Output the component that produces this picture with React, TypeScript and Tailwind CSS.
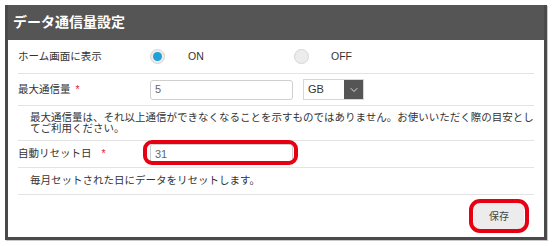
import { ChevronDown } from "lucide-react";

const font = {
  fontFamily: '"Liberation Sans", "Noto Sans CJK JP", sans-serif',
};

function Radio({ checked }: { checked: boolean }) {
  return (
    <span className="flex h-[15px] w-[15px] items-center justify-center rounded-full border border-[#d6d6d6] bg-[#ececec]">
      {checked && <span className="h-[9px] w-[9px] rounded-full bg-[#1ea0d8]" />}
    </span>
  );
}

function Required() {
  return <span className="ml-[5px] text-[#e5262e]">*</span>;
}

export default function App() {
  return (
    <div className="h-[246px] w-[552px] bg-white pl-[5px] pt-[5px] text-[#333]" style={font}>
      <div className="flex h-[235px] w-[542px] flex-col border-x-[3px] border-b-[3px] border-[#4a4a4a] shadow-[1px_1px_0_#c8c8c8]">
        <div className="flex h-[35px] items-center bg-[#555] pl-[5px] text-[14px] font-bold text-white">
          データ通信量設定
        </div>
        <div className="flex flex-col px-[10px] text-[10.5px]">
          <div className="flex h-[34px] items-center border-b border-[#e3e3e3]">
            <span className="w-[132px]">ホーム画面に表示</span>
            <Radio checked />
            <span className="ml-[23px] w-[106px]">ON</span>
            <Radio checked={false} />
            <span className="ml-[22px]">OFF</span>
          </div>
          <div className="flex h-[32px] items-center border-b border-[#e3e3e3]">
            <span className="w-[132px]">
              最大通信量
              <Required />
            </span>
            <div className="flex h-[20px] w-[143px] items-center rounded-[3px] border border-[#cfcfcf] pl-[4px] text-[11px] text-[#666]">
              5
            </div>
            <div className="ml-[10px] flex h-[21px] w-[61px] items-stretch border border-[#d6d6d6] text-[11px]">
              <span className="flex flex-1 items-center pl-[4px]">GB</span>
              <span className="flex w-[19px] items-center justify-center bg-[#555]">
                <ChevronDown size={12} color="#ddd" strokeWidth={2} />
              </span>
            </div>
          </div>
          <div className="flex h-[35px] flex-col justify-center border-b border-[#e3e3e3] pl-[12px] leading-[11px]">
            <span className="whitespace-nowrap">
              最大通信量は、それ以上通信ができなくなることを示すものではありません。お使いいただく際の目安とし
            </span>
            <span>てご利用ください。</span>
          </div>
          <div className="flex h-[27px] items-center border-b border-[#e3e3e3]">
            <span className="w-[132px]">
              自動リセット日
              <span className="ml-[10px] text-[#e5262e]">*</span>
            </span>
            <div className="relative">
              <div className="flex h-[20px] w-[143px] items-center rounded-[3px] border border-[#cfcfcf] pl-[4px] text-[11px] text-[#666]">
                31
              </div>
              <span className="absolute left-[-7px] top-[-4px] h-[25px] w-[155px] rounded-[9px] border-[4px] border-[#e60012]" />
            </div>
          </div>
          <div className="flex h-[27px] items-center border-b border-[#e3e3e3] pl-[12px]">
            毎月セットされた日にデータをリセットします。
          </div>
          <div className="flex h-[42px] items-center justify-end pr-[10px]">
            <div className="relative">
              <button className="flex h-[26px] w-[50px] items-center justify-center rounded-[5px] bg-[#ececec] text-[10px] text-[#444]">
                保存
              </button>
              <span className="absolute left-[-5px] top-[-4px] h-[34px] w-[60px] rounded-[11px] border-[4px] border-[#e60012]" />
            </div>
          </div>
        </div>
      </div>
    </div>
  );
}
